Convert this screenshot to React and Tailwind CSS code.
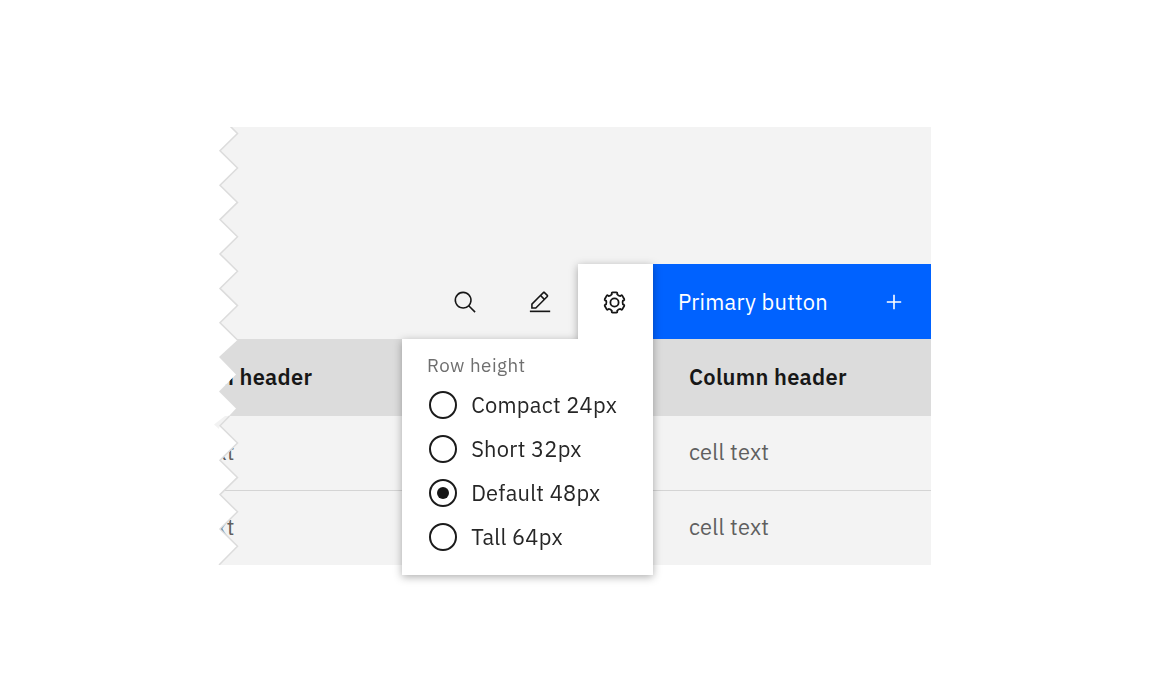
import React from "react";

function SearchIcon() {
  return (
    <svg width="25" height="25" viewBox="0 0 32 32" fill="#161616" aria-hidden="true">
      <path d="M29,27.5859l-7.5521-7.5521a11.0177,11.0177,0,1,0-1.4141,1.4141L27.5859,29ZM4,13a9,9,0,1,1,9,9A9.01,9.01,0,0,1,4,13Z" />
    </svg>
  );
}

function EditIcon() {
  return (
    <svg width="25" height="25" viewBox="0 0 32 32" fill="#161616" aria-hidden="true">
      <path d="M2.4 26.3H28.4V28.4H2.4z" />
      <path d="M25.4,9c0.8-0.8,0.8-2,0-2.8l-3.6-3.6c-0.8-0.8-2-0.8-2.8,0l-15,15V24h6.4L25.4,9z M20.4,4L24,7.6l-3,3L17.4,7L20.4,4z M6,22v-3.6l10-10l3.6,3.6l-10,10H6z" />
    </svg>
  );
}

const polar = (r, deg) => {
  const a = (deg * Math.PI) / 180;
  return `${(r * Math.sin(a)).toFixed(2)} ${(-r * Math.cos(a)).toFixed(2)}`;
};

// Six flat teeth joined by shallow valleys.
const gearPath =
  [0, 60, 120, 180, 240, 300]
    .map(
      (t, i) =>
        `${i ? "L" : "M"}${polar(8.6, t - 18)} L${polar(9.7, t - 17)} Q${polar(10.4, t - 16)} ${polar(10.3, t - 10)} L${polar(10.3, t + 10)} Q${polar(10.4, t + 16)} ${polar(9.7, t + 17)} L${polar(8.6, t + 18)} Q${polar(7.6, t + 30)} ${polar(8.6, t + 42)}`
    )
    .join(" ") + "Z";

function GearIcon() {
  return (
    <svg width="25" height="25" viewBox="-12.5 -12.5 25 25" fill="none" stroke="#161616" strokeWidth="1.8" strokeLinejoin="round" aria-hidden="true">
      <path d={gearPath} />
      <circle r="4.1" />
    </svg>
  );
}

function PlusIcon() {
  return (
    <svg width="16" height="16" viewBox="0 0 16 16" stroke="#fff" strokeWidth="1.6" aria-hidden="true">
      <path d="M8 .8v14.4M.8 8h14.4" />
    </svg>
  );
}

function TornEdge() {
  return (
    <svg className="pointer-events-none absolute -left-4 top-0" width="36" height="438" viewBox="-16 0 36 438" aria-hidden="true">
      <path fill="#fff" d="M-16 0H11L18.5 6.5L1 23.8L18.5 41L1 58.2L18.5 75.4L1 92.6L18.5 109.8L1 127L18.5 144.2L1 161.4L18.5 178.6L1 195.8L18.5 213L0 230L17 247.5L0 264.5L17 281.5L1 298.7L18.5 316L1 333.2L18.5 350.4L1 367.6L18.5 384.8L1 402L18.5 419.2L0 438H-16Z" />
      <path fill="#f2f2f2" d="M-5 297.5L6 289H9.5L1 297.6L0 302Z" />
      <g fill="none" stroke="#dcdcdc" strokeWidth="1.5">
        <path d="M11 -1L18.5 6.5L1 23.8L18.5 41L1 58.2L18.5 75.4L1 92.6L18.5 109.8L1 127L18.5 144.2L1 161.4L18.5 178.6L1 195.8L18.5 213" />
        <path d="M10.5 289L1 298.7L18.5 316L1 333.2L18.5 350.4L1 367.6L18.5 384.8L1 402L18.5 419.2L0 438" />
      </g>
    </svg>
  );
}

function Row({ children }) {
  return (
    <div className="-ml-[64.5px] grid grid-cols-[534.5px_1fr] items-center text-[21.875px] tracking-[0.25px] text-[#5f5f5f]">
      <span>{children}</span>
      <span>{children}</span>
    </div>
  );
}

function Option({ label, checked }) {
  return (
    <label className="flex h-[43.8px] items-center gap-[14.4px]">
      <span className="flex size-7 shrink-0 items-center justify-center rounded-full border-2 border-[#1b1b1b]">
        {checked && <span className="size-3 rounded-full bg-[#161616]" />}
      </span>
      <span className="whitespace-nowrap text-[21.875px] leading-7 tracking-[0.25px] text-[#262626]">{label}</span>
    </label>
  );
}

export default function App() {
  return (
    <main className="h-[690px] w-[1152px] overflow-hidden bg-white pl-[219px] pt-[127px] font-['IBM_Plex_Sans',Roboto,sans-serif]">
      <section className="relative h-[438px] w-[712px]">
        <div className="flex h-full flex-col overflow-hidden bg-[#f3f3f3]">
          <div className="h-[137.4px] shrink-0" />
          <div className="flex h-[75px] shrink-0 justify-end">
            <button className="flex w-[75px] items-center justify-center pt-px" aria-label="Search"><SearchIcon /></button>
            <button className="flex w-[75px] items-center justify-center pt-px" aria-label="Edit"><EditIcon /></button>
            <div className="w-[75px]" />
            <button className="flex w-[278px] items-center justify-between bg-[#0062ff] pl-[25px] pr-[29px] text-[21.875px] tracking-[0.25px] text-white">
              <span className="pt-[2px]">Primary button</span>
              <PlusIcon />
            </button>
          </div>
          <div className="flex h-[76.6px] shrink-0 flex-col justify-center bg-[#dcdcdc] pb-px">
            <div className="-ml-[64.5px] grid grid-cols-[534.5px_1fr] text-[21.875px] font-semibold tracking-[0.28px] text-[#171717]">
              <span>Column header</span>
              <span>Column header</span>
            </div>
          </div>
          <div className="flex h-[75px] shrink-0 flex-col justify-center border-b border-[#d4d4d4] pb-[2px]"><Row>cell text</Row></div>
          <div className="flex h-[74px] shrink-0 flex-col justify-center pb-[2px]"><Row>cell text</Row></div>
        </div>
        <TornEdge />
        <div className="absolute left-[183.4px] top-[137.4px] flex w-[250.6px] flex-col items-end drop-shadow-[0_2px_4px_rgba(0,0,0,0.32)]">
          <button className="flex h-[75px] w-[75px] items-center justify-center bg-white pr-px pt-px" aria-label="Settings"><GearIcon /></button>
          <div className="h-[235.4px] w-full bg-white pl-[26.4px] pt-[12px]">
            <div className="-ml-[1.8px] h-[32px] text-[18.75px] leading-7 tracking-[0.5px] text-[#6f6f6f]">Row height</div>
            <Option label="Compact 24px" />
            <Option label="Short 32px" />
            <Option label="Default 48px" checked />
            <Option label="Tall 64px" />
          </div>
        </div>
      </section>
    </main>
  );
}
